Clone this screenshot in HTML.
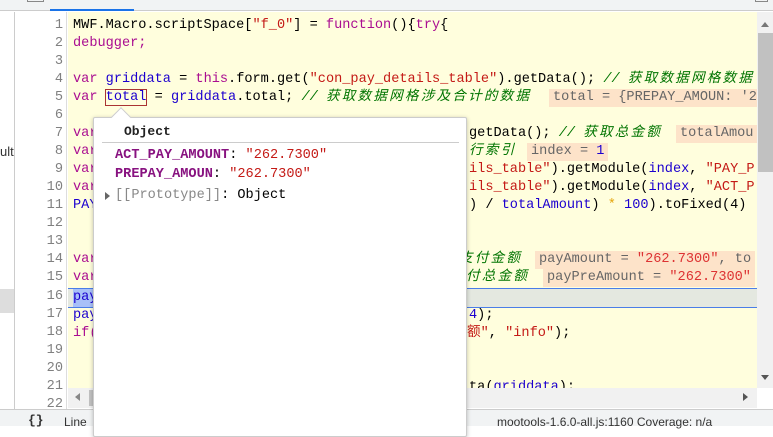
<!DOCTYPE html>
<html><head><meta charset="utf-8"><style>
*{margin:0;padding:0;box-sizing:border-box}
body{width:773px;height:426px;overflow:hidden;background:#fff;position:relative;font-family:"Liberation Mono","Noto Sans CJK SC",monospace;font-size:13.6px}
.abs{position:absolute}
.ln{position:absolute;left:15px;width:48px;text-align:right;color:#808080;height:18px;line-height:18px}
.cl{position:absolute;white-space:pre;height:18px;line-height:18px;color:#000}
.k{color:#aa0d91}.s{color:#c41a16}.v{color:#1c00cf}.c{color:#007400;font-style:italic}.n{color:#1c00cf}.o{color:#e5a50a}
.z{letter-spacing:2.2px}
.iv{background:#fde3c9;color:#666;padding:0 4px}
.iv .s{color:#d33}
</style></head><body>
<div class="abs" style="left:0;top:0;width:773px;height:11px;background:#f1f3f4;border-bottom:1px solid #ccc"></div>
<div class="abs" style="left:27px;top:0;width:17px;height:2px;border:1px solid #888;border-top:none"></div>
<div class="abs" style="left:50px;top:9px;width:84px;height:2px;background:#1a73e8"></div>
<div class="abs" style="left:755px;top:0;width:13px;height:2px;border:1px solid #888;border-top:none"></div>
<div class="abs" style="left:14px;top:12px;width:1px;height:397px;background:#ccc"></div>
<div class="abs" style="left:0;top:144px;font-family:'Liberation Sans',sans-serif;font-size:13px;color:#333">ult</div>
<div class="abs" style="left:0;top:289px;width:14px;height:24px;background:#ddd"></div>
<div class="abs" style="left:15px;top:12px;width:52px;height:397px;background:#fff;border-right:1px solid #ddd"></div>
<div class="abs" style="left:68px;top:12px;width:689px;height:376px;background:#fffedd"></div>
<div class="abs" style="left:68px;top:288px;width:689px;height:20px;background:#e4e8e0;border-top:1px solid #4a7de8;border-bottom:1px solid #4a7de8"></div>
<div class="abs" style="left:73px;top:289px;width:20px;height:18px;background:#a8c0f8"></div>
<div class="ln" style="top:17px">1</div><div class="ln" style="top:35px">2</div><div class="ln" style="top:53px">3</div><div class="ln" style="top:71px">4</div><div class="ln" style="top:89px">5</div><div class="ln" style="top:107px">6</div><div class="ln" style="top:125px">7</div><div class="ln" style="top:143px">8</div><div class="ln" style="top:161px">9</div><div class="ln" style="top:179px">10</div><div class="ln" style="top:197px">11</div><div class="ln" style="top:215px">12</div><div class="ln" style="top:233px">13</div><div class="ln" style="top:251px">14</div><div class="ln" style="top:269px">15</div><div class="ln" style="top:288px">16</div><div class="ln" style="top:306px">17</div><div class="ln" style="top:324px">18</div><div class="ln" style="top:342px">19</div><div class="ln" style="top:360px">20</div><div class="ln" style="top:378px">21</div><div class="ln" style="top:396px">22</div>
<div class="cl" style="left:73px;top:17px">MWF.Macro.scriptSpace[<span class="s">"f_0"</span>] = <span class="k">function</span>(){<span class="k">try</span>{</div>
<div class="cl k" style="left:73px;top:35px">debugger;</div>
<div class="cl" style="left:73px;top:71px"><span class="k">var</span> <span class="v">griddata</span> = <span class="k">this</span>.form.get(<span class="s">"con_pay_details_table"</span>).getData(); <span class="c">// <span class="z">获取数据网格数据</span></span></div>
<div class="cl" style="left:73px;top:89px"><span class="k">var</span> <span class="v" style="outline:1px solid #a33">total</span> = <span class="v">griddata</span>.total; <span class="c">// <span class="z">获取数据网格涉及合计的数据</span></span></div>
<div class="cl iv" style="left:549px;top:89px">total = {PREPAY_AMOUN: '2</div>
<div class="cl k" style="left:73px;top:125px">var</div>
<div class="cl" style="left:469px;top:125px">getData(); <span class="c">// <span class="z">获取总金额</span></span></div>
<div class="cl iv" style="left:676px;top:125px">totalAmou</div>
<div class="cl k" style="left:73px;top:143px">var</div>
<div class="cl" style="left:469px;top:143px"><span class="c z">行索引</span></div>
<div class="cl iv" style="left:527px;top:143px">index = <span class="n">1</span></div>
<div class="cl k" style="left:73px;top:161px">var</div>
<div class="cl" style="left:469px;top:161px"><span class="s">ils_table"</span>).getModule(<span class="v">index</span>, <span class="s">"PAY_P</span></div>
<div class="cl k" style="left:73px;top:179px">var</div>
<div class="cl" style="left:469px;top:179px"><span class="s">ils_table"</span>).getModule(<span class="v">index</span>, <span class="s">"ACT_P</span></div>
<div class="cl v" style="left:73px;top:197px">PAY</div>
<div class="cl" style="left:469px;top:197px">) / <span class="v">totalAmount</span>) <span class="o">*</span> <span class="n">100</span>).toFixed(4)</div>
<div class="cl k" style="left:73px;top:251px">var</div>
<div class="cl" style="left:459px;top:251px"><span class="c z">支付金额</span></div>
<div class="cl iv" style="left:535px;top:251px">payAmount = <span class="s">"262.7300"</span>, to</div>
<div class="cl k" style="left:73px;top:269px">var</div>
<div class="cl" style="left:466px;top:269px"><span class="c z">付总金额</span></div>
<div class="cl iv" style="left:543px;top:269px">payPreAmount = <span class="s">"262.7300"</span></div>
<div class="cl v" style="left:73px;top:289px">pay</div>
<div class="cl v" style="left:73px;top:307px">pay</div>
<div class="cl" style="left:469px;top:307px"><span class="n">4</span>);</div>
<div class="cl k" style="left:73px;top:325px">if(</div>
<div class="cl" style="left:467px;top:325px"><span class="s">额"</span>, <span class="s">"info"</span>);</div>
<div class="cl" style="left:469px;top:379px;height:9px;overflow:hidden">ta(<span class="v">griddata</span>);</div>
<div class="abs" style="left:757px;top:12px;width:16px;height:376px;background:#f1f1f1"></div>
<div class="abs" style="left:761px;top:22px;border:4px solid transparent;border-bottom:5px solid #777;border-top:none"></div>
<div class="abs" style="left:758px;top:33px;width:15px;height:139px;background:#c1c1c1"></div>
<div class="abs" style="left:761px;top:375px;border:4px solid transparent;border-top:5px solid #555;border-bottom:none"></div>
<div class="abs" style="left:68px;top:388px;width:689px;height:20px;background:#f1f1f1"></div>
<div class="abs" style="left:75px;top:393px;border:4px solid transparent;border-right:5px solid #888;border-left:none"></div>
<div class="abs" style="left:89px;top:390px;width:10px;height:16px;background:#c1c1c1"></div>
<div class="abs" style="left:743px;top:393px;border:4px solid transparent;border-left:5px solid #555;border-right:none"></div>
<div class="abs" style="left:0;top:409px;width:773px;height:17px;background:#f1f3f4;border-top:1px solid #ccc"></div>
<div class="abs" style="left:28px;top:413px;font-size:13px;color:#333;font-weight:bold">{}</div>
<div class="abs" style="left:64px;top:415px;font-family:'Liberation Sans',sans-serif;font-size:12px;color:#333">Line</div>
<div class="abs" style="left:497px;top:415px;font-family:'Liberation Sans',sans-serif;font-size:12px;color:#333;white-space:nowrap">mootools-1.6.0-all.js:1160 Coverage: n/a</div>
<div class="abs" style="left:93px;top:117px;width:374px;height:320px;background:#fff;border:1px solid #ccc;box-shadow:0 1px 4px rgba(0,0,0,.25);border-radius:2px"></div>
<div class="abs" style="left:114px;top:110px;width:14px;height:14px;background:#fff;border-left:1px solid #ccc;border-top:1px solid #ccc;transform:rotate(45deg)"></div>
<div class="abs" style="left:124px;top:124px;font-weight:bold;font-size:13px;color:#222">Object</div>
<div class="abs" style="left:102px;top:142px;width:357px;height:1px;background:#ccc"></div>
<div class="cl" style="left:115px;top:147px"><b style="color:#881280">ACT_PAY_AMOUNT</b>: <span class="s">"262.7300"</span></div>
<div class="cl" style="left:115px;top:166px"><b style="color:#881280">PREPAY_AMOUN</b>: <span class="s">"262.7300"</span></div>
<div class="abs" style="left:105px;top:192px;border:4px solid transparent;border-left:5px solid #666;border-right:none"></div>
<div class="cl" style="left:115px;top:187px"><span style="color:#888">[[Prototype]]</span>: Object</div>
</body></html>
